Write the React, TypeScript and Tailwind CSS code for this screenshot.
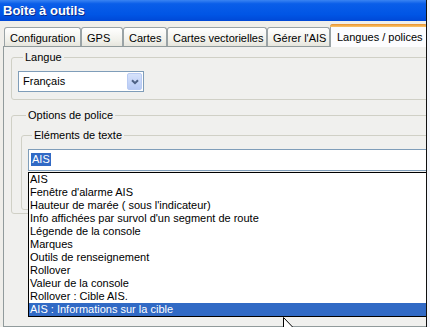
import React from "react";

const items = [
  "AIS",
  "Fenêtre d'alarme AIS",
  "Hauteur de marée ( sous l'indicateur)",
  "Info affichées par survol d'un segment de route",
  "Légende de la console",
  "Marques",
  "Outils de renseignement",
  "Rollover",
  "Valeur de la console",
  "Rollover : Cible AIS.",
  "AIS : Informations sur la cible",
];

const tabs = [
  { label: "Configuration", w: "w-[77px]" },
  { label: "GPS", w: "w-[42px]" },
  { label: "Cartes", w: "w-[44px]" },
  { label: "Cartes vectorielles", w: "w-[100px]" },
  { label: "Gérer l'AIS", w: "w-[63px]" },
];

export default function App() {
  return (
    <div className="relative w-[430px] h-[327px] overflow-hidden bg-[#f4f6fb] font-['Liberation_Sans',Arial,sans-serif] text-[11px] leading-[13px] text-black">
      <div className="relative w-[427px] h-full overflow-hidden border-r border-[#111] bg-[#efeeea] flex flex-col">
        {/* title bar */}
        <div className="h-[21px] shrink-0 bg-[linear-gradient(to_bottom,#3a84f2_0%,#0a5ee9_18%,#0055e5_70%,#0048d6_100%)] pl-[3px] flex items-center">
          <span className="text-white font-bold text-[13px] leading-[15px] [text-shadow:1px_1px_0_#0b2a8a]">
            Boîte à outils
          </span>
        </div>
        {/* tabs */}
        <div className="mt-[3px] h-[22px] shrink-0 flex items-end pl-[4px] relative z-10">
          {tabs.map((t) => (
            <div
              key={t.label}
              className={`${t.w} h-[19px] shrink-0 border border-b-0 border-[#9aa3a6] rounded-t-[3px] bg-[linear-gradient(to_bottom,#ffffff,#f0f0ea_70%,#e6e5dd)] pl-[5px] pt-[4px] whitespace-nowrap`}
            >
              {t.label}
            </div>
          ))}
          <div className="w-[97px] h-[23px] shrink-0 mb-[-1px] border border-b-0 border-[#9aa3a6] rounded-t-[3px] bg-[#fcfcfe] relative pl-[6px] pt-[6px] whitespace-nowrap">
            <div className="absolute left-[-1px] right-[-1px] top-[-1px] h-[3px] rounded-t-[3px] bg-[linear-gradient(to_bottom,#e8912f,#fcc66a)]" />
            Langues / polices
          </div>
        </div>
        {/* panel */}
        <div className="ml-[3px] w-[440px] flex-1 border border-[#919b9c] bg-[#f0f0ee] pl-[7px] pt-[4px]">
          <fieldset className="border border-[#d0d0c6] rounded-[3px] pl-[6px] pb-[7px]">
            <legend className="ml-[5px] px-[2px] leading-[13px]">Langue</legend>
            <div className="mt-[7px] w-[126px] h-[21px] border border-[#7f9db9] bg-white flex items-center justify-between pl-[4px] pr-[1px]">
              <span>Français</span>
              <div className="w-[15px] h-[17px] rounded-[2px] border border-[#b9cbf3] bg-[linear-gradient(to_bottom,#d6e2fb,#b7caf5)] flex items-center justify-center">
                <svg width="8" height="6" viewBox="0 0 8 6">
                  <path d="M1 1.2 L4 4.2 L7 1.2" fill="none" stroke="#4d6185" strokeWidth="2" />
                </svg>
              </div>
            </div>
          </fieldset>
          <fieldset className="mt-[9px] border border-[#d0d0c6] rounded-[3px] pl-[9px] pb-[3px]">
            <legend className="ml-[5px] px-[2px] leading-[13px]">Options de police</legend>
            <fieldset className="mt-[7px] border border-[#d0d0c6] rounded-[3px] pl-[6px] pb-[38px]">
              <legend className="ml-[4px] px-[2px] leading-[13px]">Eléments de texte</legend>
              <div className="mt-[7px] h-[22px] border border-[#7f9db9] bg-white pl-[2px] pt-[3px]">
                <span className="bg-[#316ac5] text-white px-[1px] inline-block leading-[13px]">AIS</span>
              </div>
            </fieldset>
          </fieldset>
        </div>
        {/* dropdown list */}
        <div className="absolute left-[28px] top-[172px] w-[400px] border border-black bg-white z-20">
          {items.map((it, i) => (
            <div
              key={it}
              className={`h-[13px] leading-[13px] pl-[1px] whitespace-nowrap ${
                i === items.length - 1 ? "bg-[#316ac5] text-white" : ""
              }`}
            >
              {it}
            </div>
          ))}
        </div>
      </div>
      {/* mouse cursor */}
      <svg className="absolute left-[283px] top-[317px] z-30" width="12" height="19" viewBox="0 0 12 19">
        <path d="M0.5 0.5 L0.5 16 L4 12.5 L6.5 18 L8.5 17 L6 11.5 L11 11.5 Z" fill="white" stroke="black" strokeWidth="1" />
      </svg>
    </div>
  );
}
